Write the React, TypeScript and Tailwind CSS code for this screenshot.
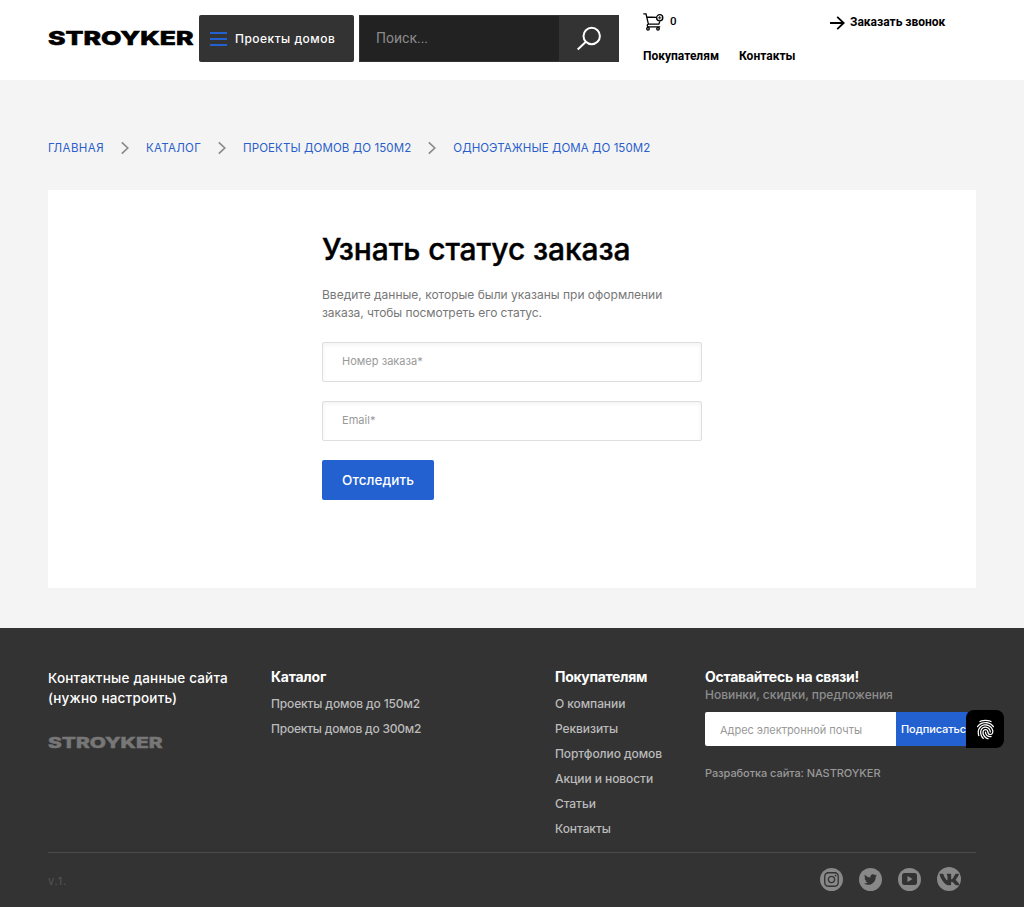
import React from "react";
import { FaInstagram, FaTwitter, FaVk } from "react-icons/fa";
import { IoFingerPrint } from "react-icons/io5";

function Logo({ className, width, height }: { className: string; width: number; height: number }) {
  return (
    <svg width={width} height={height} viewBox="0 0 146 15" preserveAspectRatio="none" overflow="visible" className={className} role="img" aria-label="STROYKER">
      <text x="0" y="14.2" textLength="145.5" lengthAdjust="spacingAndGlyphs" fontSize="19.3" className="font-['Inter',sans-serif] font-extrabold" fill="currentColor" stroke="currentColor" strokeWidth="0.6">
        STROYKER
      </text>
    </svg>
  );
}

function CartIcon() {
  return (
    <svg width="21" height="18" viewBox="0 0 21 18" fill="none" stroke="#000" strokeWidth="1.3">
      <path d="M.3.8H3l2.4 10.4h10.4l1-2.6M3.8 4l9.4.4M5.4 11.2c-1.6.6-1.5 2.6.2 2.6h11.6" />
      <circle cx="5" cy="15.8" r="1.3" />
      <circle cx="15" cy="15.8" r="1.3" />
      <circle cx="16.7" cy="4.8" r="3.1" />
      <path d="M16.7 3v3.6M14.9 4.8h3.6" strokeWidth="0.8" />
    </svg>
  );
}

function SearchIcon() {
  return (
    <svg width="26" height="26" viewBox="0 0 26 26" fill="none" stroke="#fff" strokeWidth="2">
      <circle cx="15.7" cy="10" r="8.2" />
      <path d="M9.9 15.8 1.7 23.4" />
    </svg>
  );
}

function Chevron() {
  return (
    <svg width="8" height="14" viewBox="0 0 8 14" fill="none" stroke="#888" strokeWidth="1.6" className="shrink-0">
      <path d="M.8 1.3 6.8 7l-6 5.7" />
    </svg>
  );
}

const catalog = [
  { label: "Проекты домов до 150м2", cls: "tracking-[-0.15px]" },
  { label: "Проекты домов до 300м2", cls: "tracking-[-0.23px]" },
];

const buyers = ["О компании", "Реквизиты", "Портфолио домов", "Акции и новости", "Статьи", "Контакты"];

function Field({ placeholder, label }: { placeholder: string; label: string }) {
  return (
    <input
      aria-label={label}
      placeholder={placeholder}
      className="block h-10 w-[380px] rounded-[2px] border border-[#dedede] bg-white px-[19px] pb-[2px] text-[11px] tracking-[0.03px] shadow-[inset_0_2px_4px_rgba(0,0,0,0.05)] outline-none placeholder:text-[#999]"
    />
  );
}

export default function App() {
  return (
    <div className="relative flex h-[907px] w-[1024px] flex-col overflow-hidden bg-[#f4f4f4] font-['Inter',sans-serif] text-black">
      <header className="flex h-20 shrink-0 bg-white pl-12">
        <Logo className="mt-[31px] shrink-0" width={146} height={15} />
        <button className="mt-[15px] ml-[5px] flex h-[47px] w-[155px] shrink-0 items-center rounded-[2px] bg-[#333] pl-[11px]">
          <span className="mt-[1px] flex w-[17px] flex-col gap-1">
            <span className="h-[2px] bg-[#2361d1]" />
            <span className="h-[2px] bg-[#2361d1]" />
            <span className="h-[2px] bg-[#2361d1]" />
          </span>
          <span className="ml-2 text-[12px] font-medium tracking-[0.48px] whitespace-nowrap text-white">Проекты домов</span>
        </button>
        <div className="mt-[15px] ml-[5px] flex h-[47px] w-[260px] shrink-0 bg-[#333] p-px">
          <input aria-label="Поиск" placeholder="Поиск..." className="w-[199px] bg-[#222] pl-4 font-['Roboto',sans-serif] text-[14px] outline-none placeholder:text-[#8b8b8b]" />
          <button aria-label="Найти" className="pt-px pl-[17px]">
            <SearchIcon />
          </button>
        </div>
        <div className="ml-6 w-[187px] shrink-0 pt-[13px] font-['Roboto',sans-serif] text-[12px] leading-4 font-bold">
          <div className="flex h-[18px] items-start gap-[6px]">
            <CartIcon />
            <span className="text-[11.5px] font-medium">0</span>
          </div>
          <nav className="mt-[17px] flex gap-5">
            <a>Покупателям</a>
            <a>Контакты</a>
          </nav>
        </div>
        <a className="mt-[14px] flex h-4 items-center gap-[5px] font-['Roboto',sans-serif] text-[12px] font-bold whitespace-nowrap">
          <svg width="15" height="14" viewBox="0 0 15 14" fill="none" stroke="#000" strokeWidth="1.8" className="mt-[2px]">
            <path d="M0 7h13.5M7.2.8 13.7 7l-6.5 6.2" />
          </svg>
          Заказать звонок
        </a>
      </header>

      <nav className="mt-15 flex h-4 shrink-0 items-center gap-[17px] pl-12 text-[11.5px] leading-4 whitespace-nowrap text-[#2a5fcb]">
        <a className="tracking-[0.43px]">ГЛАВНАЯ</a>
        <Chevron />
        <a className="tracking-[0.27px]">КАТАЛОГ</a>
        <Chevron />
        <a className="tracking-[0.1px]">ПРОЕКТЫ ДОМОВ ДО 150М2</a>
        <Chevron />
        <a className="tracking-[0.06px]">ОДНОЭТАЖНЫЕ ДОМА ДО 150М2</a>
      </nav>

      <main className="mx-12 mt-[34px] h-[398px] shrink-0 bg-white pl-[274px]">
        <h1 className="pt-10 text-[30px] leading-[38px] font-medium tracking-[-0.1px] [-webkit-text-stroke:0.4px_#000]">Узнать статус заказа</h1>
        <p className="mt-[18px] w-[360px] text-[12px] leading-[18px] text-[#777]">
          Введите данные, которые были указаны при оформлении
          <br />
          <span className="tracking-[-0.06px]">заказа, чтобы посмотреть его статус.</span>
        </p>
        <form className="mt-5 flex flex-col gap-[19px]">
          <Field label="Номер заказа" placeholder="Номер заказа*" />
          <Field label="Email" placeholder="Email*" />
          <button type="button" className="h-10 w-28 rounded-[2px] bg-[#2361d1] text-[13.5px] font-medium tracking-[0.07px] text-white">
            Отследить
          </button>
        </form>
      </main>

      <footer className="mt-10 flex-1 bg-[#333] px-12">
        <div className="flex h-[225px] border-b border-[#4a4a4a] pt-10">
          <div className="w-[223px] shrink-0">
            <p className="text-[13.5px] leading-5 font-medium tracking-[0.2px] text-white">
              Контактные данные сайта
              <br />
              (нужно настроить)
            </p>
            <Logo className="mt-[30px] text-[#777]" width={115} height={11} />
          </div>
          <div className="w-[284px] shrink-0">
            <h2 className="-mt-px text-[14px] leading-[19px] font-bold tracking-[-0.24px] text-white">Каталог</h2>
            <ul className="mt-[5px] text-[12px] leading-[25px] font-medium text-[#bbb]">
              {catalog.map((item) => (
                <li key={item.label} className={item.cls}>{item.label}</li>
              ))}
            </ul>
          </div>
          <div className="w-[150px] shrink-0">
            <h2 className="-mt-px text-[14px] leading-[19px] font-bold tracking-[-0.32px] text-white">Покупателям</h2>
            <ul className="mt-[5px] text-[12px] leading-[25px] font-medium tracking-[-0.08px] text-[#bbb]">
              {buyers.map((item) => (
                <li key={item}>{item}</li>
              ))}
            </ul>
          </div>
          <div className="w-[271px] shrink-0">
            <h2 className="-mt-px mb-px text-[14px] leading-[19px] font-bold tracking-[-0.25px] text-white">Оставайтесь на связи!</h2>
            <p className="text-[12px] leading-4 font-medium tracking-[-0.02px] text-[#8d8d8d]">Новинки, скидки, предложения</p>
            <div className="mt-[9px] flex h-[34px]">
              <input aria-label="Адрес электронной почты" placeholder="Адрес электронной почты" className="w-[191px] rounded-l-[2px] bg-white pt-[2px] pl-[15px] text-[11px] tracking-[-0.03px] outline-none placeholder:text-[#999]" />
              <button className="w-20 rounded-r-[2px] bg-[#2361d1] pt-px pl-[5px] text-left text-[11px] font-medium tracking-[-0.08px] text-white">Подписаться</button>
            </div>
            <p className="mt-[19px] text-[11px] leading-4 font-medium tracking-[-0.07px] text-[#999]">Разработка сайта: NASTROYKER</p>
          </div>
        </div>
        <div className="flex justify-between pt-[15px] pr-[15px]">
          <span className="mt-[5px] text-[11px] leading-4 tracking-[0.9px] text-[#555]">v.1.</span>
          <div className="-mt-px flex items-center gap-4 text-[#333]">
            <a aria-label="Instagram" className="grid size-[23px] place-items-center rounded-full bg-[#888]">
              <FaInstagram size={17} />
            </a>
            <a aria-label="Twitter" className="grid size-[23px] place-items-center rounded-full bg-[#888]">
              <FaTwitter size={13} />
            </a>
            <a aria-label="YouTube" className="grid size-[23px] place-items-center rounded-full bg-[#888]">
              <svg width="15" height="12" viewBox="0 0 15 12">
                <rect width="15" height="12" rx="2.5" fill="#333" />
                <path d="M5.5 3v6l5-3z" fill="#888" />
              </svg>
            </a>
            <a aria-label="VK" className="grid size-6 place-items-center rounded-full bg-[#888]">
              <FaVk size={21} />
            </a>
          </div>
        </div>
      </footer>

      <button aria-label="Отпечаток" className="absolute top-[710px] left-[966px] grid size-[38px] place-items-center rounded-[8px] rounded-bl-none bg-black text-white">
        <IoFingerPrint size={21} />
      </button>
    </div>
  );
}
